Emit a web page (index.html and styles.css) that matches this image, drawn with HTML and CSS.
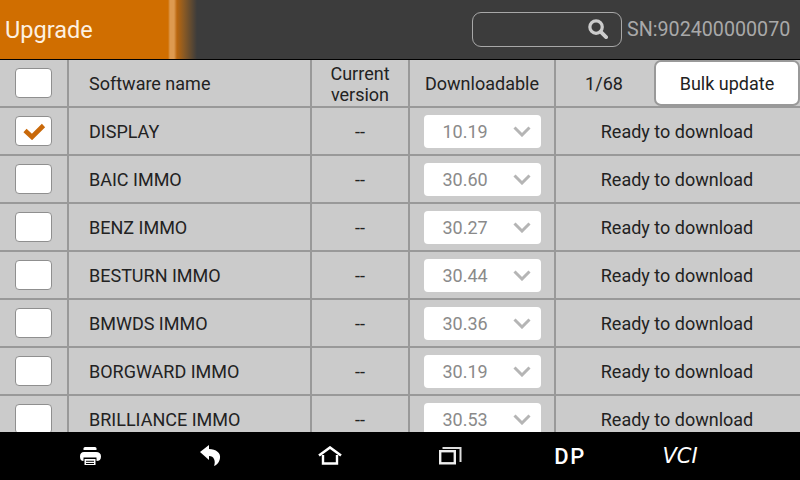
FILE: index.html
```html
<!DOCTYPE html>
<html lang="en">
<head>
  <meta charset="UTF-8" />
  <title>Upgrade</title>
  <link rel="stylesheet" href="styles.css">
</head>
<body>
  <header class="topbar">
    <div class="title-tab">Upgrade</div>
    <div class="search">
      <svg class="search-icon" viewBox="0 0 22 22" width="21" height="21">
        <circle cx="9.5" cy="9.5" r="6.5" fill="none" stroke="#ccc" stroke-width="3.4" />
        <path d="M14.5 14.5 L20 20" stroke="#ccc" stroke-width="4" stroke-linecap="round" />
      </svg>
    </div>
    <div class="serial">SN:902400000070</div>
  </header>

  <main class="list">
    <div class="row head">
      <div class="cell check"><span class="box"></span></div>
      <div class="cell name">Software name</div>
      <div class="cell center current">Current<br>version</div>
      <div class="cell center">Downloadable</div>
      <div class="cell tools">
        <span class="count">1/68</span>
        <button class="bulk">Bulk update</button>
      </div>
    </div>

    <div class="row">
      <div class="cell check"><span class="box">
        <svg viewBox="0 0 24 18" width="24" height="18"><path d="M3 8.5 L10 15 L21.5 3.5" fill="none" stroke="#c9690a" stroke-width="4.6" /></svg>
      </span></div>
      <div class="cell name">DISPLAY</div>
      <div class="cell center">--</div>
      <div class="cell center"><div class="select"><span>10.19</span><svg viewBox="0 0 18 11" width="18" height="11"><path d="M1.5 1.5 L9 9 L16.5 1.5" fill="none" stroke="#b5b5b5" stroke-width="3" /></svg></div></div>
      <div class="cell center status">Ready to download</div>
    </div>
    <div class="row">
      <div class="cell check"><span class="box"></span></div>
      <div class="cell name">BAIC IMMO</div>
      <div class="cell center">--</div>
      <div class="cell center"><div class="select"><span>30.60</span><svg viewBox="0 0 18 11" width="18" height="11"><path d="M1.5 1.5 L9 9 L16.5 1.5" fill="none" stroke="#b5b5b5" stroke-width="3" /></svg></div></div>
      <div class="cell center status">Ready to download</div>
    </div>
    <div class="row">
      <div class="cell check"><span class="box"></span></div>
      <div class="cell name">BENZ IMMO</div>
      <div class="cell center">--</div>
      <div class="cell center"><div class="select"><span>30.27</span><svg viewBox="0 0 18 11" width="18" height="11"><path d="M1.5 1.5 L9 9 L16.5 1.5" fill="none" stroke="#b5b5b5" stroke-width="3" /></svg></div></div>
      <div class="cell center status">Ready to download</div>
    </div>
    <div class="row">
      <div class="cell check"><span class="box"></span></div>
      <div class="cell name">BESTURN IMMO</div>
      <div class="cell center">--</div>
      <div class="cell center"><div class="select"><span>30.44</span><svg viewBox="0 0 18 11" width="18" height="11"><path d="M1.5 1.5 L9 9 L16.5 1.5" fill="none" stroke="#b5b5b5" stroke-width="3" /></svg></div></div>
      <div class="cell center status">Ready to download</div>
    </div>
    <div class="row">
      <div class="cell check"><span class="box"></span></div>
      <div class="cell name">BMWDS IMMO</div>
      <div class="cell center">--</div>
      <div class="cell center"><div class="select"><span>30.36</span><svg viewBox="0 0 18 11" width="18" height="11"><path d="M1.5 1.5 L9 9 L16.5 1.5" fill="none" stroke="#b5b5b5" stroke-width="3" /></svg></div></div>
      <div class="cell center status">Ready to download</div>
    </div>
    <div class="row">
      <div class="cell check"><span class="box"></span></div>
      <div class="cell name">BORGWARD IMMO</div>
      <div class="cell center">--</div>
      <div class="cell center"><div class="select"><span>30.19</span><svg viewBox="0 0 18 11" width="18" height="11"><path d="M1.5 1.5 L9 9 L16.5 1.5" fill="none" stroke="#b5b5b5" stroke-width="3" /></svg></div></div>
      <div class="cell center status">Ready to download</div>
    </div>
    <div class="row">
      <div class="cell check"><span class="box"></span></div>
      <div class="cell name">BRILLIANCE IMMO</div>
      <div class="cell center">--</div>
      <div class="cell center"><div class="select"><span>30.53</span><svg viewBox="0 0 18 11" width="18" height="11"><path d="M1.5 1.5 L9 9 L16.5 1.5" fill="none" stroke="#b5b5b5" stroke-width="3" /></svg></div></div>
      <div class="cell center status">Ready to download</div>
    </div>
  </main>

  <nav class="navbar">
    <div class="nav-item">
      <svg viewBox="0 0 24 20" width="24" height="20">
        <path d="M5.500 4 V2.500 Q5.500 1 7 1 H17 Q18.500 1 18.500 2.500 V4 Z" fill="#fff" />
        <path d="M6 6 H18 Q23 6 23 10.500 Q23 15 18.500 15 V11.500 H5.500 V15 Q2 15 2 10.500 Q2 6 6 6 Z" fill="#fff" />
        <path d="M6.500 13 H17.500 V19 H6.500 Z M8 14.800 V15.800 H16 V14.800 Z M8 17 V18 H16 V17 Z" fill="#fff" fill-rule="evenodd" />
      </svg>
    </div>
    <div class="nav-item">
      <svg viewBox="0 0 22 24" width="22" height="24">
        <path d="M1 8 L10 1 V5 C17 5 22 9 21 14 C20.500 18 18 21 15 22 C17 17 15 12 10 12 V16 Z" fill="#fff" />
      </svg>
    </div>
    <div class="nav-item">
      <svg viewBox="0 0 24 20" width="24" height="20">
        <path d="M1 9.500 L12 1.500 L23 9.500" fill="none" stroke="#fff" stroke-width="2.600" />
        <path d="M5 9 V17.500 H19 V9" fill="none" stroke="#fff" stroke-width="2.400" />
      </svg>
    </div>
    <div class="nav-item">
      <svg viewBox="0 0 24 20" width="24" height="20">
        <path d="M4.500 2 H22.500 V16" fill="none" stroke="#ddd" stroke-width="2" />
        <rect x="2.200" y="5.200" width="14.600" height="12.100" fill="#000" stroke="#eee" stroke-width="2.400" />
      </svg>
    </div>
    <div class="nav-item label">DP</div>
    <div class="nav-item label vci">VCI</div>
  </nav>
</body>
</html>
```

FILE: styles.css
```css
/* Reset & base */
* {
  box-sizing: border-box;
}
body {
  margin: 0;
  width: 800px;
  height: 480px;
  overflow: hidden;
  display: flex;
  flex-direction: column;
  font-family: Roboto, 'Liberation Sans', sans-serif;
  background: #cbcbcb;
  color: #222;
}

/* Top bar */
.topbar {
  height: 60px;
  flex: none;
  display: flex;
  align-items: center;
  background: #3c3c3c;
  border-bottom: 1px solid #000;
}
.title-tab {
  width: 198px;
  height: 100%;
  padding-left: 5px;
  display: flex;
  align-items: center;
  font-size: 23.5px;
  color: #fdf1e2;
  background: linear-gradient(90deg, #d06e00 0, #d06e00 168px, #dd9a50 170px, #dd9a50 174px, #b9660e 177px, #8a5a24 184px, #3c3c3c 197px);
}
.search {
  width: 150px;
  height: 35px;
  margin-left: 274px;
  padding-right: 4px;
  display: flex;
  align-items: center;
  justify-content: flex-end;
  border: 1px solid #a8a8a8;
  border-radius: 9px;
}
.search-icon {
  margin-right: 9px;
  margin-top: -3px;
}
.serial {
  margin-left: 5px;
  font-size: 19.7px;
  color: #a9a9a9;
  white-space: nowrap;
}

/* Software list */
.list {
  flex: 1;
  min-height: 0;
  overflow: hidden;
}
.row {
  height: 48px;
  display: grid;
  grid-template-columns: 69px 243px 98px 146px 1fr;
  border-bottom: 2px solid #999;
  font-size: 18px;
}
.cell {
  display: flex;
  align-items: center;
  border-right: 2px solid #999;
  min-width: 0;
}
.cell:last-child {
  border-right: none;
}
.check {
  justify-content: center;
}
.box {
  width: 37px;
  height: 30px;
  display: flex;
  align-items: center;
  justify-content: center;
  background: #fff;
  border: 1px solid #8f8f8f;
  border-radius: 4px;
}
.name {
  padding-left: 20px;
}
.center {
  justify-content: center;
  text-align: center;
}
.status {
  padding-right: 2px;
}
.current {
  padding-top: 1px;
  line-height: 21px;
}

/* Version dropdown */
.select {
  width: 117px;
  height: 33px;
  padding: 0 10px 0 19px;
  display: flex;
  align-items: center;
  justify-content: space-between;
  background: #fff;
  border-radius: 4px;
  color: #8a8a8a;
}

/* Header tools */
.tools {
  justify-content: space-between;
}
.count {
  width: 96px;
  text-align: center;
}
.bulk {
  width: 146px;
  height: 46px;
  padding-top: 1px;
  align-self: flex-start;
  font: inherit;
  color: inherit;
  background: #fff;
  border: 2px solid #999;
  border-radius: 7px;
}

/* Bottom navigation */
.navbar {
  height: 48px;
  flex: none;
  display: flex;
  padding-left: 30px;
  background: #000;
  color: #fff;
}
.nav-item {
  width: 120px;
  display: flex;
  align-items: center;
  justify-content: center;
}
.label {
  font-size: 22px;
  font-weight: 500;
  letter-spacing: 1.500px;
}
.vci {
  width: 100px;
  font-family: 'DejaVu Sans', sans-serif;
  font-size: 21px;
  font-style: italic;
  letter-spacing: 0;
}
```
